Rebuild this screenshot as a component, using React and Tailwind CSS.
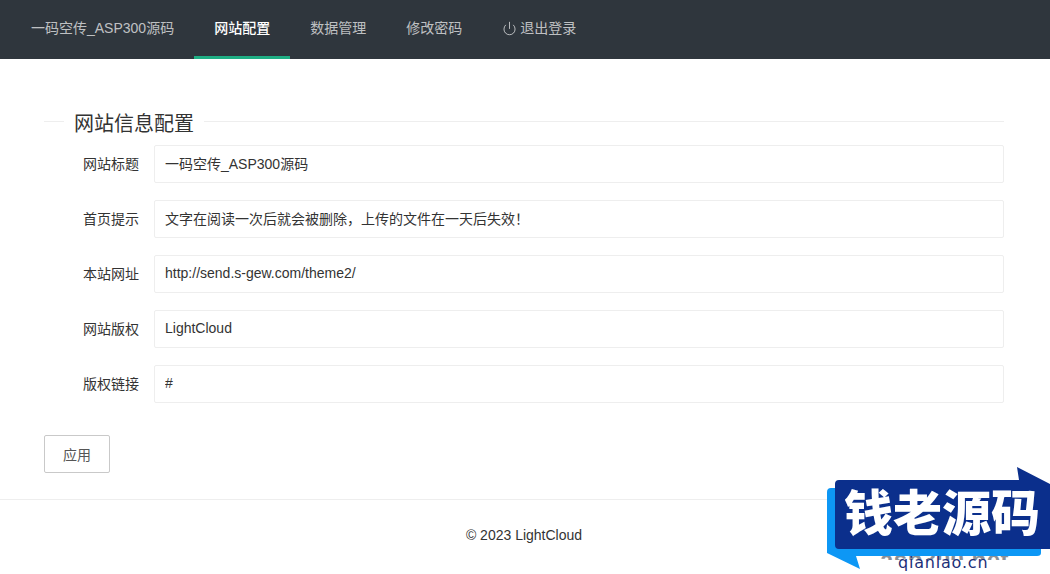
import { Power } from 'lucide-react'

const FONT = "font-['Liberation_Sans','Noto_Sans_CJK_SC',sans-serif]"

const NAV_ITEMS = [
  { label: '网站配置', active: true },
  { label: '数据管理' },
  { label: '修改密码' },
]

const FIELDS = [
  { label: '网站标题', value: '一码空传_ASP300源码' },
  { label: '首页提示', value: '文字在阅读一次后就会被删除，上传的文件在一天后失效！' },
  { label: '本站网址', value: 'http://send.s-gew.com/theme2/' },
  { label: '网站版权', value: 'LightCloud' },
  { label: '版权链接', value: '#' },
]

function Watermark() {
  return (
    <div className="absolute left-[827px] top-[467px] w-[223px] h-[107px] overflow-hidden">
      <div className="absolute left-[53px] top-[81px] text-[24px] leading-[24px] tracking-[0.5px] font-bold text-[#8a8f96] whitespace-nowrap">
        asp300.net
      </div>
      <div className="absolute left-0 top-[93px] w-full h-[14px] bg-white" />
      <svg className="absolute left-0 top-0" width="223" height="107" viewBox="0 0 223 107">
        <path d="M0 25 Q0 21 4 21 H214 V86 Q214 89 210 89 H29 L33 102 L0 86 Z" fill="#0d97f5" />
        <path d="M12 13 H192 L190 0 L223 17 V82 H12 Q8 82 8 78 V17 Q8 13 12 13 Z" fill="#0b2f8c" />
      </svg>
      <div className="absolute left-[17px] top-[23px] w-[198px] text-[49px] leading-[48px] font-black text-white whitespace-nowrap">
        钱老源码
      </div>
      <div className="absolute left-[71px] top-[86px] text-[16px] leading-[20px] tracking-[0.8px] text-[#1c2f78] whitespace-nowrap font-['DejaVu_Sans',sans-serif]">
        qianlao.cn
      </div>
    </div>
  )
}

export default function App() {
  return (
    <div className={`relative w-[1050px] h-[574px] overflow-hidden bg-white text-[14px] text-[#333] ${FONT}`}>

      {/* Nav */}
      <nav className="flex h-[59px] bg-[#2f363d] pl-[11px] text-white/70">
        <a className="px-[20px] leading-[57px]">一码空传_ASP300源码</a>
        {NAV_ITEMS.map(item => (
          <a
            key={item.label}
            className={`h-[59px] px-[20px] leading-[57px] border-b-[3px] ${item.active ? 'border-[#1fae84] font-medium text-white' : 'border-transparent'}`}
          >
            {item.label}
          </a>
        ))}
        <a className="flex items-start gap-[3px] px-[20px] leading-[57px]">
          <Power size={15} strokeWidth={1.5} className="mt-[21px]" />
          退出登录
        </a>
      </nav>

      {/* Form */}
      <div className="px-[44px] pr-[46px]">
        <div className="flex items-start gap-[10px] mt-[51px] h-[26px]">
          <div className="w-[20px] mt-[11px] border-t border-[#eee]" />
          <h2 className="pt-[1px] text-[20px] leading-[26px] font-normal text-[#333]">网站信息配置</h2>
          <div className="flex-1 mt-[11px] border-t border-[#eee]" />
        </div>

        <div className="flex flex-col gap-[17px] mt-[9px]">
          {FIELDS.map(field => (
            <div key={field.label} className="flex items-center">
              <label className="w-[110px] pr-[15px] text-right text-[14px]">{field.label}</label>
              <input
                readOnly
                value={field.value}
                className="h-[38px] flex-1 rounded-[2px] border border-[#eee] bg-white px-[10px] pb-[2px] text-[14px] text-[#333] outline-none"
              />
            </div>
          ))}
        </div>

        <button className="mt-[32px] block h-[38px] w-[66px] rounded-[2px] border border-[#c9c9c9] bg-white pt-[2px] text-[14px] text-[#555]">
          应用
        </button>
      </div>

      {/* Footer */}
      <footer className="mt-[26px] border-t border-[#eee] pt-[25px] text-center text-[14px] leading-[20px] pr-[2px]">
        © 2023 LightCloud
      </footer>

      <Watermark />
    </div>
  )
}
